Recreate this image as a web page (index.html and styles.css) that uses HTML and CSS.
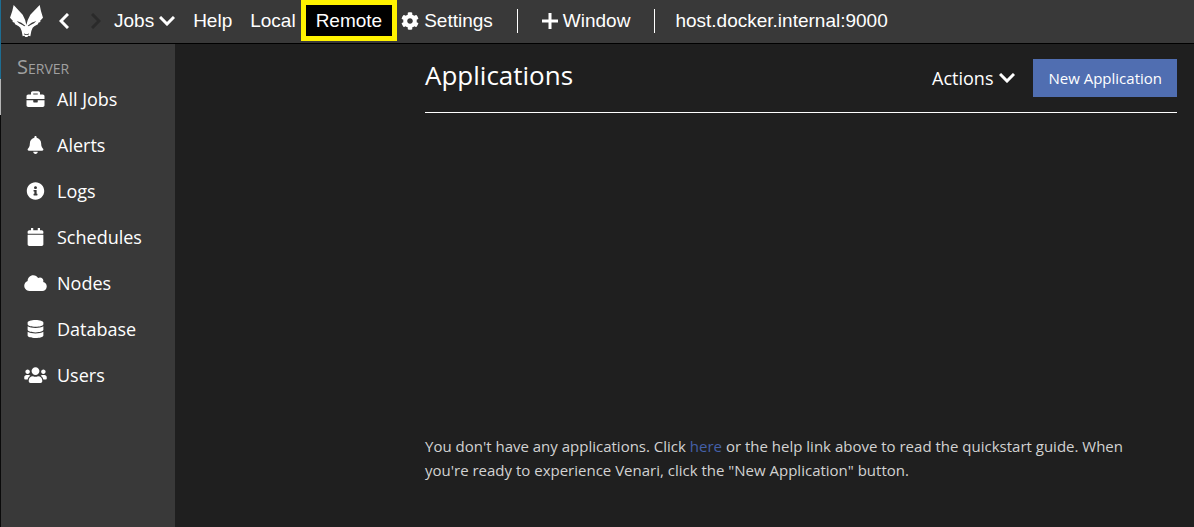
FILE: index.html
```html
<!DOCTYPE html>
<html lang="en">
<head>
<meta charset="utf-8">
<title>Applications</title>
<link rel="stylesheet" href="styles.css">
</head>
<body>
<div class="window">
  <header class="topbar">
    <svg class="logo" viewBox="0 0 99 96" aria-hidden="true">
      <path class="logo-face" d="M11 0L38 29Q46 42 49 60Q53 42 61 29L89 0Q92 18 99 38L90 48L92 50L84 54L85 57L73 64L68 68L64 78L61 94L55 92L52 96H46L43 92L38 94L35 78L31 68L26 64L14 57L15 54L7 50L9 48L0 38Q8 18 11 0Z"/>
      <path class="logo-line" d="M20 48L34 53L46 62L43 64L36 59L27 55ZM79 48L65 53L53 62L56 64L63 59L72 55ZM42 85L47 88H52L57 85L55 90H44Z"/>
    </svg>
    <button class="nav-arrow" aria-label="Back"><svg class="arrow" viewBox="0 0 10 16"><path d="M9 1L2 8L9 15"/></svg></button>
    <button class="nav-arrow nav-arrow-off" aria-label="Forward" disabled><svg class="arrow" viewBox="0 0 10 16"><path d="M1 1L8 8L1 15"/></svg></button>
    <nav class="menu">
      <button class="menu-item">Jobs <svg class="chevron" viewBox="0 0 16 10"><path d="M1 1L8 8L15 1"/></svg></button>
      <button class="menu-item">Help</button>
      <button class="menu-item">Local</button>
    </nav>
    <button class="menu-item remote">Remote</button>
    <button class="menu-item"><svg class="cog" viewBox="0 0 512 512"><path d="M487.4 315.7l-42.6-24.6c4.3-23.2 4.3-47 0-70.2l42.6-24.6c4.9-2.8 7.1-8.6 5.5-14-11.1-35.6-30-67.8-54.7-94.6-3.8-4.1-10-5.1-14.8-2.3L380.8 110c-17.9-15.4-38.5-27.3-60.8-35.1V25.8c0-5.6-3.9-10.5-9.4-11.7-36.7-8.2-74.3-7.8-109.2 0-5.5 1.2-9.4 6.1-9.4 11.7V75c-22.2 7.9-42.8 19.8-60.8 35.1L88.7 85.5c-4.9-2.8-11-1.9-14.8 2.3-24.7 26.7-43.6 58.9-54.7 94.6-1.7 5.4.6 11.2 5.5 14L67.3 221c-4.3 23.2-4.3 47 0 70.2l-42.6 24.6c-4.9 2.8-7.1 8.6-5.5 14 11.1 35.6 30 67.8 54.7 94.6 3.8 4.1 10 5.1 14.8 2.3l42.6-24.6c17.9 15.4 38.5 27.3 60.8 35.1v49.2c0 5.6 3.9 10.5 9.4 11.7 36.7 8.2 74.3 7.8 109.2 0 5.5-1.2 9.4-6.1 9.4-11.7v-49.2c22.2-7.9 42.8-19.8 60.8-35.1l42.6 24.6c4.9 2.8 11 1.9 14.8-2.3 24.7-26.7 43.6-58.9 54.7-94.6 1.5-5.5-.7-11.3-5.6-14.1zM256 336c-44.1 0-80-35.9-80-80s35.9-80 80-80 80 35.9 80 80-35.9 80-80 80z"/></svg>Settings</button>
    <span class="divider"></span>
    <button class="menu-item"><svg class="plus" viewBox="0 0 16 16"><path d="M8 0V16M0 8H16"/></svg>Window</button>
    <span class="divider"></span>
    <span class="host">host.docker.internal:9000</span>
  </header>
  <div class="body">
    <aside class="sidebar">
      <h2 class="group-title">Server</h2>
      <ul class="side-list">
        <li><a class="side-link" href="#"><svg class="side-icon" viewBox="0 0 512 512"><path d="M320 336c0 8.84-7.16 16-16 16h-96c-8.84 0-16-7.16-16-16v-48H0v144c0 25.6 22.4 48 48 48h416c25.6 0 48-22.4 48-48V288H320v48zm144-208h-80V80c0-25.6-22.4-48-48-48H176c-25.6 0-48 22.4-48 48v48H48c-25.6 0-48 22.4-48 48v80h512v-80c0-25.6-22.4-48-48-48zm-144 0H192V96h128v32z"/></svg>All Jobs</a></li>
        <li><a class="side-link" href="#"><svg class="side-icon" viewBox="0 0 448 512"><path d="M224 512c35.32 0 63.97-28.65 63.97-64H160.03c0 35.35 28.65 64 63.97 64zm215.39-149.71c-19.32-20.76-55.47-51.99-55.47-154.29 0-77.7-54.48-139.9-127.94-155.16V32c0-17.67-14.32-32-31.98-32s-31.98 14.33-31.98 32v20.84C118.56 68.1 64.08 130.3 64.08 208c0 102.3-36.15 133.53-55.47 154.29-6 6.45-8.66 14.16-8.61 21.71.11 16.4 12.98 32 32.1 32h383.8c19.12 0 32-15.6 32.1-32 .05-7.55-2.61-15.27-8.61-21.71z"/></svg>Alerts</a></li>
        <li><a class="side-link" href="#"><svg class="side-icon" viewBox="0 0 512 512"><path d="M256 8C119.043 8 8 119.083 8 256c0 136.997 111.043 248 248 248s248-111.003 248-248C504 119.083 392.957 8 256 8zm0 110c23.196 0 42 18.804 42 42s-18.804 42-42 42-42-18.804-42-42 18.804-42 42-42zm56 254c0 6.627-5.373 12-12 12h-88c-6.627 0-12-5.373-12-12v-24c0-6.627 5.373-12 12-12h12v-64h-12c-6.627 0-12-5.373-12-12v-24c0-6.627 5.373-12 12-12h64c6.627 0 12 5.373 12 12v100h12c6.627 0 12 5.373 12 12v24z"/></svg>Logs</a></li>
        <li><a class="side-link" href="#"><svg class="side-icon" viewBox="0 0 448 512"><path d="M12 192h424c6.6 0 12 5.4 12 12v260c0 26.5-21.5 48-48 48H48c-26.5 0-48-21.5-48-48V204c0-6.6 5.4-12 12-12zm436-44v-36c0-26.5-21.5-48-48-48h-48V12c0-6.6-5.4-12-12-12h-40c-6.6 0-12 5.4-12 12v52H160V12c0-6.6-5.4-12-12-12h-40c-6.6 0-12 5.4-12 12v52H48C21.5 64 0 85.5 0 112v36c0 6.6 5.4 12 12 12h424c6.6 0 12-5.4 12-12z"/></svg>Schedules</a></li>
        <li><a class="side-link" href="#"><svg class="side-icon" viewBox="0 0 640 512"><path d="M537.6 226.6c4.1-10.7 6.4-22.4 6.4-34.6 0-53-43-96-96-96-19.7 0-38.1 6-53.3 16.2C367 64.2 315.3 32 256 32c-88.4 0-160 71.6-160 160 0 2.7.1 5.4.2 8.1C40.2 219.8 0 273.2 0 336c0 79.5 64.5 144 144 144h368c70.7 0 128-57.3 128-128 0-61.9-44-113.6-102.4-125.4z"/></svg>Nodes</a></li>
        <li><a class="side-link" href="#"><svg class="side-icon" viewBox="0 0 448 512"><path d="M448 73.143v45.714C448 159.143 347.667 192 224 192S0 159.143 0 118.857V73.143C0 32.857 100.333 0 224 0s224 32.857 224 73.143zM448 176v102.857C448 319.143 347.667 352 224 352S0 319.143 0 278.857V176c48.125 33.143 136.208 48.572 224 48.572S399.874 209.143 448 176zm0 160v102.857C448 479.143 347.667 512 224 512S0 479.143 0 438.857V336c48.125 33.143 136.208 48.572 224 48.572S399.874 369.143 448 336z"/></svg>Database</a></li>
        <li><a class="side-link" href="#"><svg class="side-icon" viewBox="0 0 640 512"><path d="M96 224c35.3 0 64-28.7 64-64s-28.7-64-64-64-64 28.7-64 64 28.7 64 64 64zm448 0c35.3 0 64-28.7 64-64s-28.7-64-64-64-64 28.7-64 64 28.7 64 64 64zm32 32h-64c-17.6 0-33.5 7.1-45.1 18.6 40.3 22.1 68.9 62 75.1 109.4h66c17.7 0 32-14.3 32-32v-32c0-35.3-28.7-64-64-64zm-256 0c61.9 0 112-50.1 112-112S381.9 32 320 32 208 82.1 208 144s50.1 112 112 112zm76.8 32h-8.3c-20.8 10-43.9 16-68.5 16s-47.6-6-68.5-16h-8.3C179.6 288 128 339.6 128 403.2V432c0 26.5 21.5 48 48 48h288c26.5 0 48-21.5 48-48v-28.8c0-63.6-51.6-115.2-115.2-115.2zm-223.7-13.4C161.5 263.1 145.6 256 128 256H64c-35.3 0-64 28.7-64 64v32c0 17.7 14.3 32 32 32h65.9c6.3-47.4 34.9-87.3 75.2-109.4z"/></svg>Users</a></li>
      </ul>
    </aside>
    <main class="content">
      <div class="page-head">
        <h1 class="page-title">Applications</h1>
        <button class="actions">Actions <svg class="chevron" viewBox="0 0 16 10"><path d="M1 1L8 8L15 1"/></svg></button>
        <button class="primary">New Application</button>
      </div>
      <p class="empty">You don't have any applications. Click <a class="link" href="#">here</a> or the help link above to read the quickstart guide. When you're ready to experience Venari, click the "New Application" button.</p>
    </main>
  </div>
</div>
</body>
</html>
```
FILE: styles.css
```css
* {
  box-sizing: border-box;
}

body {
  margin: 0;
  background: #1f1f1f;
  color: #fff;
  font-family: "Open Sans", "Noto Sans", sans-serif;
}

button {
  border: 0;
  padding: 0;
  background: none;
  color: inherit;
  font: inherit;
  white-space: nowrap;
}

svg {
  flex: none;
  fill: currentColor;
}

.window {
  display: flex;
  flex-direction: column;
  min-height: 100vh;
  padding-left: 1px;
  background: linear-gradient(#1d6d92 0 79px, #b5b5b5 79px 115px, #0a0a0a 115px);
}

.topbar {
  display: flex;
  align-items: center;
  height: 44px;
  padding: 0 9px 2px;
  border-bottom: 1px solid #000;
  background: #393939;
  font: 19px/24px "Liberation Sans", Arial, sans-serif;
}

.logo {
  width: 33px;
  height: 32px;
  margin-right: 16px;
}

.logo-face {
  fill: #fff;
}

.logo-line {
  fill: #393939;
}

.nav-arrow {
  display: flex;
  margin-right: 22px;
}

.nav-arrow-off {
  margin-right: 13px;
  color: #2a2a2a;
}

.arrow,
.chevron,
.plus {
  fill: none;
  stroke: currentColor;
  stroke-width: 3;
}

.arrow {
  width: 10px;
  height: 16px;
}

.chevron {
  width: 16px;
  height: 10px;
}

.menu {
  display: flex;
  gap: 18px;
  margin-right: 5px;
}

.menu-item {
  display: flex;
  align-items: center;
  gap: 5px;
}

.remote {
  height: 41px;
  margin-right: 4px;
  padding: 0 10px;
  border: 5px solid #fff200;
  background: #000;
}

.cog {
  width: 18px;
  height: 18px;
}

.plus {
  width: 16px;
  height: 16px;
}

.divider {
  width: 1px;
  height: 24px;
  margin: 0 24px;
  background: #fff;
}

.divider + .host {
  margin-left: -4px;
}

.body {
  display: flex;
  flex: 1;
}

.sidebar {
  flex: none;
  width: 174px;
  padding: 11px 16px;
  background: #393939;
}

.group-title {
  margin: 0;
  color: #a0a0a0;
  font-size: 20px;
  font-weight: 400;
  line-height: 24px;
  font-variant: small-caps;
}

.side-list {
  display: flex;
  flex-direction: column;
  gap: 22px;
  margin: 8px 0 0;
  padding: 0 0 0 7px;
  list-style: none;
}

.side-link {
  display: flex;
  align-items: center;
  gap: 10px;
  color: #fff;
  font-size: 18px;
  line-height: 24px;
  text-decoration: none;
}

.side-icon {
  width: 23px;
  height: 18px;
}

.content {
  flex: 1;
  display: flex;
  flex-direction: column;
  justify-content: space-between;
  padding: 15px 17px 45px 250px;
  background: #1f1f1f;
}

.page-head {
  display: flex;
  align-items: flex-start;
  padding-bottom: 15px;
  border-bottom: 1px solid #fff;
}

.page-title {
  flex: 1;
  margin: 0;
  font-size: 26px;
  font-weight: 400;
  line-height: 32px;
}

.actions {
  display: flex;
  align-items: center;
  gap: 6px;
  height: 38px;
  margin-right: 18px;
  font-size: 18px;
}

.primary {
  height: 38px;
  padding: 0 15px;
  background: #506eb1;
  font-size: 15px;
}

.empty {
  margin: 0;
  padding-right: 32px;
  color: #d2d2d2;
  font-size: 15px;
  line-height: 24px;
}

.link {
  color: #4460a8;
  text-decoration: none;
}
```
